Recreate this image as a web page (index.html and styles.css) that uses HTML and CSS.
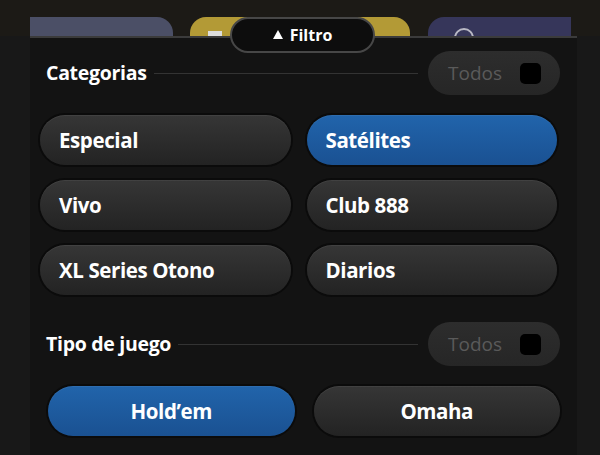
FILE: index.html
```html
<!DOCTYPE html>
<html lang="es">
<head>
    <meta charset="UTF-8">
    <meta name="viewport" content="width=device-width, initial-scale=1.0">
    <title>Filtro - Torneos</title>
    <link rel="stylesheet" href="styles.css">
</head>
<body>

<!-- Cards behind the filter sheet -->
<div class="top-strip">
    <div class="peek-card peek-blue"></div>
    <div class="peek-card peek-yellow"><span class="peek-icon-box"></span></div>
    <div class="peek-card peek-purple"><span class="peek-icon-ring"></span></div>
    <button class="filter-tab"><span class="tri"></span>Filtro</button>
</div>

<div class="sheet">
    <!-- Categorias -->
    <div class="section-head">
        <span class="section-title">Categorias</span>
        <span class="section-line"></span>
        <div class="all-toggle">Todos <span class="check"></span></div>
    </div>
    <div class="chip-grid">
        <div class="chip">Especial</div>
        <div class="chip active">Satélites</div>
        <div class="chip">Vivo</div>
        <div class="chip">Club 888</div>
        <div class="chip">XL Series Otono</div>
        <div class="chip">Diarios</div>
    </div>

    <!-- Tipo de juego -->
    <div class="section-head second">
        <span class="section-title">Tipo de juego</span>
        <span class="section-line"></span>
        <div class="all-toggle">Todos <span class="check"></span></div>
    </div>
    <div class="game-grid">
        <div class="chip centered active">Hold’em</div>
        <div class="chip centered">Omaha</div>
    </div>
</div>

</body>
</html>
```

FILE: styles.css
```css
/* General Reset */
* {
    margin: 0;
    padding: 0;
    box-sizing: border-box;
}
body {
    font-family: 'Open Sans', 'Liberation Sans', sans-serif;
    background-color: #181818;
    color: #fff;
    width: 600px;
    height: 455px;
    overflow: hidden;
}

/* Top strip with the cards peeking out */
.top-strip {
    height: 36px;
    background-color: #1c1a16;
    display: flex;
    align-items: flex-end;
    padding-left: 30px;
    position: relative;
}
.peek-card {
    height: 19px;
    border-radius: 0 16px 0 0;
    position: relative;
    overflow: hidden;
}
.peek-blue {
    width: 143px;
    background-color: #4b4f66;
}
.peek-yellow {
    width: 220px;
    margin-left: 17px;
    background-color: #b39a36;
    border-radius: 16px 16px 0 0;
}
.peek-purple {
    width: 143px;
    margin-left: 18px;
    background-color: #36365a;
    border-radius: 16px 0 0 0;
}
.peek-icon-box {
    position: absolute;
    left: 18px;
    bottom: 0;
    width: 14px;
    height: 5px;
    background-color: #ddd;
}
.peek-icon-ring {
    position: absolute;
    left: 26px;
    top: 11px;
    width: 20px;
    height: 20px;
    border: 2px solid #b8b8c4;
    border-radius: 50%;
}

/* Filter tab sitting over the sheet edge */
.filter-tab {
    position: absolute;
    left: 230px;
    top: 17px;
    width: 145px;
    height: 36px;
    border-radius: 18px;
    background-color: #0d0d0d;
    border: 2px solid #474747;
    color: #fff;
    font-family: inherit;
    font-weight: 700;
    font-size: 16px;
    display: flex;
    align-items: center;
    justify-content: center;
    z-index: 2;
}
.filter-tab .tri {
    width: 0;
    height: 0;
    border-left: 5px solid transparent;
    border-right: 5px solid transparent;
    border-bottom: 9px solid #fff;
    margin-right: 7px;
    margin-top: -1px;
}

/* Filter sheet */
.sheet {
    margin: 0 23px 0 30px;
    height: 419px;
    background-color: #131313;
    border-top: 2px solid #3b3b3b;
    padding-top: 13px;
}

.section-head {
    display: flex;
    align-items: center;
    height: 44px;
    padding-left: 16px;
    padding-right: 17px;
}
.section-head.second {
    margin-top: 27px;
}
.section-title {
    font-size: 19.5px;
    font-weight: 700;
    letter-spacing: -0.3px;
    margin-top: -2px;
}
.section-line {
    flex-grow: 1;
    height: 1px;
    background-color: #333;
    margin: 0 10px 0 7px;
}
.all-toggle {
    width: 132px;
    height: 44px;
    border-radius: 22px;
    background: linear-gradient(#2d2d2d, #262626);
    color: #5a5a5a;
    font-size: 19px;
    display: flex;
    align-items: center;
    justify-content: space-between;
    padding: 0 19px 0 20px;
}
.check {
    width: 21px;
    height: 21px;
    border-radius: 5px;
    background-color: #000;
}

/* Chips */
.chip-grid {
    display: grid;
    grid-template-columns: 1fr 1fr;
    column-gap: 16px;
    row-gap: 15px;
    margin-top: 20px;
    padding: 0 20px 0 10px;
}
.game-grid {
    display: grid;
    grid-template-columns: 1fr 1fr;
    column-gap: 19px;
    margin-top: 20px;
    padding: 0 17px 0 18px;
}
.chip {
    height: 50px;
    border-radius: 25px;
    background: linear-gradient(#363636, #232323);
    box-shadow: 0 0 0 2px #0b0b0b, inset 0 1px 0 rgba(255, 255, 255, 0.06);
    display: flex;
    align-items: center;
    padding-left: 19px;
    font-size: 20.5px;
    font-weight: 700;
    letter-spacing: -0.4px;
}
.chip.centered {
    justify-content: center;
    padding-left: 0;
}
.chip.active {
    background: linear-gradient(#2164ab, #1a5192);
}
```
